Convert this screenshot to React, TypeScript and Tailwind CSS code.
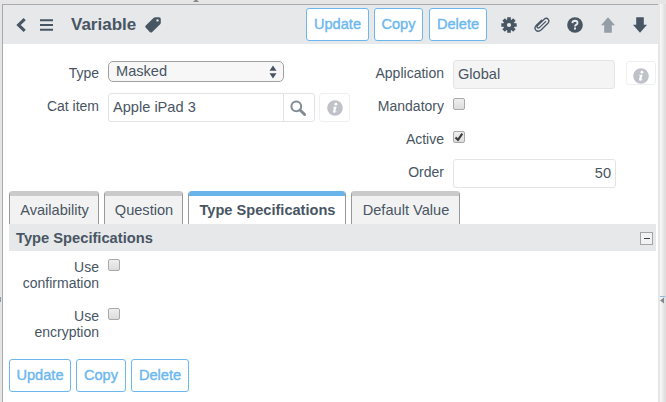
import type { ReactNode } from "react";

function Btn({ children, className = "" }: { children: ReactNode; className?: string }) {
  return (
    <button
      className={`flex h-[33px] items-center justify-center rounded-[3px] border border-[#6cb8ee] bg-white text-[14.6px] text-[#6cb8ee] [-webkit-text-stroke:0.4px_#6cb8ee] ${className}`}
    >
      {children}
    </button>
  );
}

function Check({ checked = false }: { checked?: boolean }) {
  return (
    <span className="block h-3 w-3 shrink-0 rounded-[2px] border border-[#a9a9a9] bg-linear-to-b from-[#efefef] to-[#dcdcdc]">
      {checked && (
        <svg viewBox="0 0 10 10" className="h-[10px] w-[10px]">
          <path d="M1.5 5.4 4 7.8 8.3 1.6" fill="none" stroke="#3b3b3b" strokeWidth="2.1" />
        </svg>
      )}
    </span>
  );
}

function Info() {
  return (
    <svg viewBox="0 0 16 16" className="h-4 w-4">
      <circle cx="8" cy="8" r="7.8" fill="#bfc3c8" />
      <circle cx="8.9" cy="4.2" r="1.35" fill="#fff" />
      <path d="M6.1 6.7h3.5L8.4 11q-.1.7 1.2.3l-.2.8q-3.5 1.5-3.4-.7L7 7.6l-1.1-.1Z" fill="#fff" />
    </svg>
  );
}

function Tab({ children, active = false, className = "" }: { children: ReactNode; active?: boolean; className?: string }) {
  return (
    <div
      className={`flex h-[33px] flex-col overflow-hidden rounded-t-[4px] border-x border-[#999] text-[14.6px] ${active ? "bg-white font-bold" : "bg-[#f2f2f2]"} ${className}`}
    >
      <div className={`-mx-px h-[5px] shrink-0 ${active ? "bg-[#67b3ea]" : "bg-[#cacaca]"}`} />
      <div className="flex h-7 items-center justify-center whitespace-nowrap pl-px pt-px">{children}</div>
    </div>
  );
}

function Header() {
  return (
    <header className="flex h-[39px] items-center bg-[#e6e8ea] pl-3">
      <svg viewBox="0 0 12 14" className="h-[14px] w-3">
        <path d="M9.7 1.2 3.6 7l6.1 5.8" fill="none" stroke="#485563" strokeWidth="3.1" />
      </svg>
      <svg viewBox="0 0 13 12" className="ml-[13px] mt-px h-3 w-[13px]">
        <path d="M0 1.2h13M0 6h13M0 10.8h13" stroke="#485563" strokeWidth="1.9" />
      </svg>
      <h1 className="ml-[18px] w-[66px] whitespace-nowrap pt-px text-[17px] font-bold leading-5">Variable</h1>
      <svg viewBox="0 0 16 16" className="ml-2 h-4 w-4">
        <path fillRule="evenodd" d="M8.5 1.1Q9.4.2 10.6.2H14q1.8 0 1.8 1.8v3.4q0 1.2-.9 2.1L7.2 15q-1.2 1.2-2.4 0L.8 10.8q-1-1.1 0-2.2ZM12.5 2.2a1.2 1.2 0 1 0 0 2.4 1.2 1.2 0 0 0 0-2.4Z" fill="#485563" />
      </svg>
      <div className="ml-[145px] flex">
        <Btn className="w-[63px]">Update</Btn>
        <Btn className="ml-[5px] w-[49px]">Copy</Btn>
        <Btn className="ml-[6px] w-[58px]">Delete</Btn>
      </div>
      <svg viewBox="0 0 16 16" className="ml-[14px] h-4 w-4">
        <g stroke="#485563" strokeWidth="3.6">
          <path d="M8 .3v15.4M.3 8h15.4M2.6 2.6l10.8 10.8M13.4 2.6 2.6 13.4" />
        </g>
        <circle cx="8" cy="8" r="5.7" fill="#485563" />
        <circle cx="8" cy="8" r="2.1" fill="#e6e8ea" />
      </svg>
      <svg viewBox="0 0 16 16" className="ml-[17px] h-4 w-4">
        <path d="m11.6 4.6-6.2 6q-1.2 1-2-.1-.8-.9.2-1.9l6.6-6.4q2.2-1.9 4 .1 1.6 1.9-.3 3.9L7.3 12.7q-3 2.8-5.3.6-2.3-2.4.4-5.1l5.2-5" fill="none" stroke="#485563" strokeWidth="1.3" strokeLinecap="round" />
      </svg>
      <svg viewBox="0 0 16 16" className="ml-[17px] h-4 w-4">
        <circle cx="8" cy="8" r="7.8" fill="#485563" />
        <path d="M5.4 6.1Q5.5 3.8 8 3.8q2.5.1 2.5 2.1 0 1-1.2 1.8Q8 8.4 8 9.5" fill="none" stroke="#e6e8ea" strokeWidth="1.9" />
        <path d="M7 10.6h2v2H7Z" fill="#e6e8ea" />
      </svg>
      <svg viewBox="0 0 14 16" className="ml-[18px] h-4 w-[14px]">
        <path d="m7 .2 7 8h-3.2v7.6H3.2V8.2H0Z" fill="#959da6" />
      </svg>
      <svg viewBox="0 0 14 16" className="ml-[18px] h-4 w-[14px]">
        <path d="m7 15.8 7-8h-3.2V.2H3.2v7.6H0Z" fill="#485563" />
      </svg>
    </header>
  );
}

function Fields() {
  return (
    <section className="flex h-[147px]">
      <div className="w-[347px] pt-[17px]">
        <div className="flex h-8">
          <label className="w-[96px] pt-[2px] text-right leading-5">Type</label>
          <div className="ml-[9px] flex h-[21px] w-[176px] items-center rounded-[5px] border border-[#a0a0a0] bg-[#f7f7f7] pl-[7px] pr-[6px] text-[14.6px]">
            <span className="grow">Masked</span>
            <svg viewBox="0 0 8 14" className="h-[14px] w-2">
              <path d="m4 .4 3.5 5.4h-7ZM4 13.6.5 8.2h7Z" fill="#485563" />
            </svg>
          </div>
        </div>
        <div className="flex">
          <label className="w-[96px] pt-[3px] text-right leading-5">Cat item</label>
          <div className="ml-[9px] flex h-[29px] w-[207px] rounded-[3px] border border-[#e2e3e4] text-[14.6px]">
            <div className="flex w-[175px] items-center border-r border-[#e2e3e4] pl-1 leading-[27px]">Apple iPad 3</div>
            <div className="flex grow items-center justify-center pr-[2px]">
              <svg viewBox="0 0 16 16" className="h-4 w-4">
                <circle cx="6.3" cy="6.3" r="4.9" fill="none" stroke="#828b94" strokeWidth="2" />
                <path d="m10 10 4.6 4.5" stroke="#828b94" strokeWidth="2.9" strokeLinecap="round" />
              </svg>
            </div>
          </div>
          <div className="ml-1 flex h-[29px] w-[31px] items-center justify-center rounded-[3px] border border-[#efefef]">
            <Info />
          </div>
        </div>
      </div>
      <div className="w-[308px] pt-4">
        <div className="flex h-[33px]">
          <label className="w-[94px] pt-[3px] text-right leading-5">Application</label>
          <div className="ml-[9px] flex h-[29px] w-[162px] items-center rounded-[3px] border border-[#e3e4e5] bg-[#f4f4f4] pl-1 text-[14.6px] leading-[27px]">Global</div>
          <div className="ml-[11px] mt-px flex h-6 w-[30px] items-end justify-center rounded-[3px] border border-[#efefef]">
            <Info />
          </div>
        </div>
        <div className="flex h-[33px]">
          <label className="mr-[9px] w-[94px] pt-[3px] text-right leading-5">Mandatory</label>
          <div className="pt-[5px]"><Check /></div>
        </div>
        <div className="flex h-[33px]">
          <label className="mr-[9px] w-[94px] pt-[3px] text-right leading-5">Active</label>
          <div className="pt-[5px]"><Check checked /></div>
        </div>
        <div className="flex">
          <label className="w-[94px] pt-[3px] text-right leading-5">Order</label>
          <div className="ml-[9px] flex h-[29px] w-[163px] items-center justify-end rounded-[3px] border border-[#e3e4e5] pr-1 text-[14.6px]">50</div>
        </div>
      </div>
    </section>
  );
}

export default function App() {
  return (
    <div className="flex h-[402px] w-[666px] flex-col overflow-hidden bg-[#e5e5e5] font-['Liberation_Sans',Arial,sans-serif] text-[14px] text-[#485563]">
      <div className="flex h-1 shrink-0 justify-end pr-[466px]">
        <svg viewBox="0 0 8 4" className="h-1 w-2">
          <path d="M1 2 3 0h2l2 2Z" fill="#888" />
        </svg>
      </div>
      <div className="flex grow">
        <div className="flex w-[2px] flex-col pt-[293px]"><div className="h-[5px] w-px bg-[#8d9aa5]" /></div>
        <main className="w-[656px] border-l border-t border-[#aaa] bg-white">
          <Header />
          <Fields />
          <nav className="flex pl-[6px]">
            <Tab className="w-[90px]">Availability</Tab>
            <Tab className="ml-[5px] w-[79px]">Question</Tab>
            <Tab active className="ml-[5px] w-[158px]">Type Specifications</Tab>
            <Tab className="ml-[5px] w-[109px]">Default Value</Tab>
          </nav>
          <div className="ml-[6px] mr-[2px] flex h-[27px] items-center justify-between bg-[#e6e8ea] pl-[7px] pr-[3px]">
            <h2 className="pt-[2px] text-[14.7px] font-bold">Type Specifications</h2>
            <span className="mt-px flex h-[13px] w-[13px] items-center justify-center border border-[#a2a5a7] bg-[#f1f2f2]">
              <span className="h-px w-[6px] bg-[#444]" />
            </span>
          </div>
          <div className="flex h-[49px] pt-[8px]">
            <label className="mr-[9px] w-[96px] pl-2 text-right leading-4">Use confirmation</label>
            <Check />
          </div>
          <div className="flex h-[59px] pt-[8px]">
            <label className="mr-[9px] w-[96px] pl-2 text-right leading-4">Use encryption</label>
            <Check />
          </div>
          <div className="flex pl-[6px]">
            <Btn className="w-[62px]">Update</Btn>
            <Btn className="ml-[5px] w-[50px]">Copy</Btn>
            <Btn className="ml-[5px] w-[58px]">Delete</Btn>
          </div>
        </main>
        <aside className="flex w-2 flex-col border-l-2 border-[#e6e6e6] bg-linear-to-r from-[#fafafa] to-[#dadada] pt-[292px]">
          <svg viewBox="0 0 5 8" className="h-2 w-[5px]">
            <path d="M0 .5h5" stroke="#8dbbe0" />
            <path d="M4 1.5v6L0 4.5Z" fill="#888" />
          </svg>
        </aside>
      </div>
    </div>
  );
}
